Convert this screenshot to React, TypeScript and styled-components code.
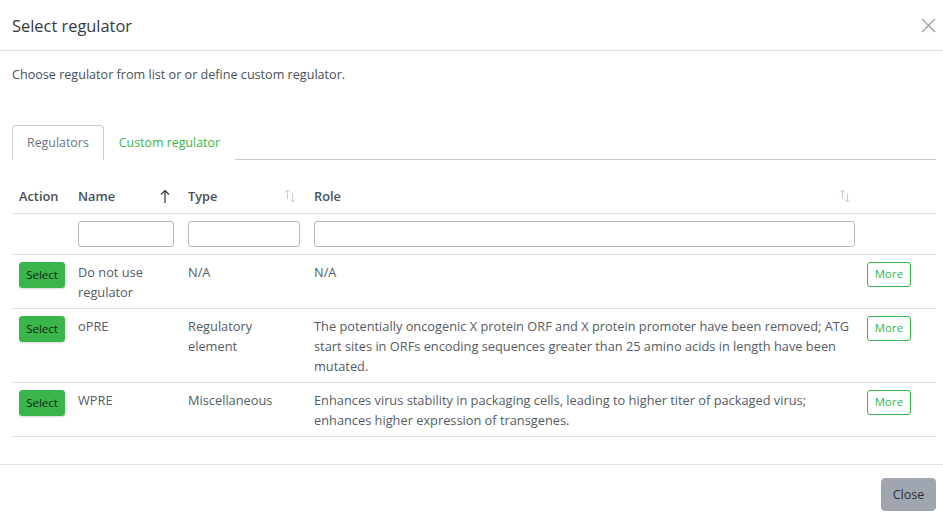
import React from "react";
import styled, { createGlobalStyle } from "styled-components";

const Global = createGlobalStyle`
  html, body { margin: 0; padding: 0; background: #fff; }
  body { font-family: "Open Sans", "Noto Sans", sans-serif; color: #495057; }
  * { box-sizing: border-box; }
`;

const Modal = styled.div`
  width: 943px;
  height: 521px;
  display: flex;
  flex-direction: column;
  background: #fff;
`;

const Header = styled.div`
  height: 51px;
  display: flex;
  align-items: center;
  justify-content: space-between;
  padding: 0 7px 0 12px;
  border-bottom: 1px solid #dee2e6;
`;

const Title = styled.h5`
  margin: 0;
  font-size: 16.4px;
  font-weight: 500;
  color: #343a40;
`;

const CloseX = styled.button`
  border: 0;
  background: none;
  padding: 0;
  width: 16px;
  height: 16px;
  display: flex;
  align-items: center;
  justify-content: center;
  cursor: pointer;
`;

const Body = styled.div`
  flex: 1;
  padding: 15px 7px 0 12px;
`;

const Intro = styled.p`
  margin: 0;
  font-size: 12.6px;
  line-height: 18px;
  color: #495057;
`;

const Tabs = styled.div`
  margin-top: 41px;
  display: flex;
  border-bottom: 1px solid #c8ccd0;
  height: 35px;
`;

const Tab = styled.div<{ $active?: boolean }>`
  height: 35px;
  padding: 0 14px;
  display: flex;
  align-items: center;
  font-size: 12.4px;
  color: ${(p) => (p.$active ? "#6c757d" : "#39b54a")};
  border: 1px solid ${(p) => (p.$active ? "#c8ccd0" : "transparent")};
  border-bottom-color: ${(p) => (p.$active ? "#fff" : "transparent")};
  border-radius: 4px 4px 0 0;
  margin-bottom: -1px;
  background: #fff;
`;

const Table = styled.table`
  width: 100%;
  border-collapse: collapse;
  margin-top: 19px;
  font-size: 12.8px;
  table-layout: fixed;
`;

const Th = styled.th`
  text-align: left;
  font-weight: 600;
  color: #495057;
  padding: 0 7px;
  height: 34px;
  border-bottom: 1px solid #dee2e6;
  vertical-align: middle;
`;

const ThInner = styled.div`
  display: flex;
  align-items: center;
  justify-content: space-between;
  padding-right: 3px;
`;

const FilterCell = styled.td`
  padding: 7px 7px;
  height: 41px;
  border-bottom: 1px solid #dee2e6;
`;

const FilterInput = styled.input`
  display: block;
  width: 100%;
  height: 26px;
  border: 1px solid #b5bac1;
  border-radius: 3px;
  outline: none;
  font: inherit;
`;

const Td = styled.td`
  padding: 7px 7px 6px;
  vertical-align: top;
  border-bottom: 1px solid #dee2e6;
  line-height: 20px;
  color: #555c63;
`;

const SelectBtn = styled.button`
  display: block;
  background: #39b54a;
  border: 1px solid #39b54a;
  border-radius: 3px;
  color: #16241a;
  font: inherit;
  font-size: 11.5px;
  height: 26px;
  width: 46px;
  padding: 0;
  box-shadow: 0 1px 2px rgba(0,0,0,0.15);
`;

const MoreBtn = styled.button`
  display: block;
  background: #fff;
  border: 1px solid #39b54a;
  border-radius: 3px;
  color: #39b54a;
  font: inherit;
  font-size: 11.5px;
  height: 25px;
  width: 44px;
  padding: 0;
  margin-left: -2px;
`;

const Footer = styled.div`
  height: 57px;
  border-top: 1px solid #dee2e6;
  display: flex;
  align-items: center;
  justify-content: flex-end;
  padding: 0 7px 0 12px;
`;

const CloseBtn = styled.button`
  background: #9fa6b0;
  border: 1px solid #9fa6b0;
  border-radius: 4px;
  color: #2b2f33;
  font: inherit;
  font-size: 12.5px;
  height: 33px;
  width: 55px;
  padding: 0;
  margin-top: 2px;
`;

const SortIcon = ({ active }: { active?: boolean }) =>
  active ? (
    <svg width="12" height="16" viewBox="0 0 12 16">
      <path d="M6 2.5V15M2 6.5L6 2.5L10 6.5" stroke="#333" strokeWidth="1.2" fill="none" />
    </svg>
  ) : (
    <svg width="14" height="16" viewBox="0 0 14 16">
      <path d="M4.5 2V11M2 4.5L4.5 2L7 4.5" stroke="#c9ccd0" strokeWidth="1" fill="none" />
      <path d="M9.5 5V14M7 11.5L9.5 14L12 11.5" stroke="#c9ccd0" strokeWidth="1" fill="none" />
    </svg>
  );

const rows = [
  { name: "Do not use regulator", type: "N/A", role: "N/A" },
  {
    name: "oPRE",
    type: "Regulatory element",
    role:
      "The potentially oncogenic X protein ORF and X protein promoter have been removed; ATG start sites in ORFs encoding sequences greater than 25 amino acids in length have been mutated.",
  },
  {
    name: "WPRE",
    type: "Miscellaneous",
    role:
      "Enhances virus stability in packaging cells, leading to higher titer of packaged virus; enhances higher expression of transgenes.",
  },
];

export default function App() {
  return (
    <Modal>
      <Global />
      <Header>
        <Title>Select regulator</Title>
        <CloseX aria-label="close">
          <svg width="15" height="15" viewBox="0 0 15 15">
            <path d="M1 1L14 14M14 1L1 14" stroke="#9aa0a6" strokeWidth="1.3" />
          </svg>
        </CloseX>
      </Header>
      <Body>
        <Intro>Choose regulator from list or or define custom regulator.</Intro>
        <Tabs>
          <Tab $active>Regulators</Tab>
          <Tab>Custom regulator</Tab>
        </Tabs>
        <Table>
          <colgroup>
            <col style={{ width: 59 }} />
            <col style={{ width: 110 }} />
            <col style={{ width: 126 }} />
            <col />
            <col style={{ width: 74 }} />
          </colgroup>
          <thead>
            <tr>
              <Th>Action</Th>
              <Th>
                <ThInner>
                  Name <SortIcon active />
                </ThInner>
              </Th>
              <Th>
                <ThInner>
                  Type <SortIcon />
                </ThInner>
              </Th>
              <Th>
                <ThInner>
                  Role <SortIcon />
                </ThInner>
              </Th>
              <Th />
            </tr>
            <tr>
              <FilterCell />
              <FilterCell>
                <FilterInput />
              </FilterCell>
              <FilterCell>
                <FilterInput />
              </FilterCell>
              <FilterCell>
                <FilterInput />
              </FilterCell>
              <FilterCell />
            </tr>
          </thead>
          <tbody>
            {rows.map((r) => (
              <tr key={r.name}>
                <Td>
                  <SelectBtn>Select</SelectBtn>
                </Td>
                <Td>{r.name}</Td>
                <Td>{r.type}</Td>
                <Td>{r.role}</Td>
                <Td>
                  <MoreBtn>More</MoreBtn>
                </Td>
              </tr>
            ))}
          </tbody>
        </Table>
      </Body>
      <Footer>
        <CloseBtn>Close</CloseBtn>
      </Footer>
    </Modal>
  );
}
